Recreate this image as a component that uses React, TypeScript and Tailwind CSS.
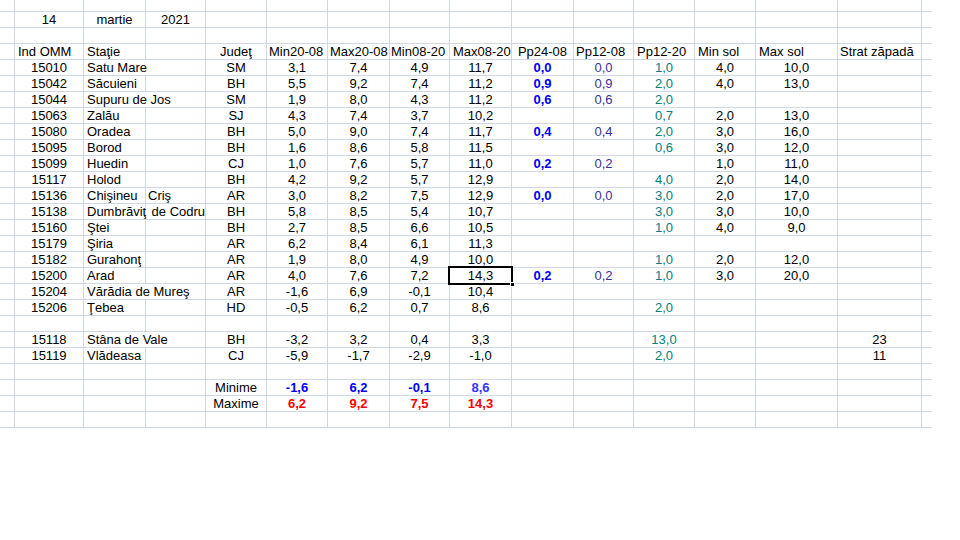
import React from "react";

type Cell = string | { t: string; cls?: string };

const widths = [
  "w-[15px]",
  "w-[69px]",
  "w-[62px]",
  "w-[60px]",
  "w-[61px]",
  "w-[61px]",
  "w-[62px]",
  "w-[60px]",
  "w-[62px]",
  "w-[62px]",
  "w-[60px]",
  "w-[61px]",
  "w-[61px]",
  "w-[82px]",
  "w-[84px]",
  "w-[10px]",
];

// default look of a data cell, per column
const colCls = [
  "",
  "text-center",
  "pl-[3px] text-left",
  "pl-[2px] text-left",
  "text-center",
  "text-center",
  "text-center",
  "text-center",
  "text-center",
  "text-center font-bold text-[#0000ff]",
  "text-center text-[#333399]",
  "text-center text-[#008080]",
  "text-center",
  "text-center",
  "text-center",
  "",
];

const headerCls = [
  "",
  "pl-[3px] text-left",
  "pl-[3px] text-left",
  "",
  "text-center",
  "pl-[2px] text-left",
  "pl-[2px] text-left",
  "pl-[1px] text-left",
  "pl-[3px] text-left",
  "text-center",
  "pl-[2px] text-left",
  "pl-[3px] text-left",
  "pl-[3px] text-left",
  "pl-[3px] text-left",
  "pl-[2px] text-left",
  "",
];

const stations: string[][] = [
  ["15010", "Satu Mare", "", "SM", "3,1", "7,4", "4,9", "11,7", "0,0", "0,0", "1,0", "4,0", "10,0", ""],
  ["15042", "Săcuieni", "", "BH", "5,5", "9,2", "7,4", "11,2", "0,9", "0,9", "2,0", "4,0", "13,0", ""],
  ["15044", "Supuru de Jos", "", "SM", "1,9", "8,0", "4,3", "11,2", "0,6", "0,6", "2,0", "", "", ""],
  ["15063", "Zalău", "", "SJ", "4,3", "7,4", "3,7", "10,2", "", "", "0,7", "2,0", "13,0", ""],
  ["15080", "Oradea", "", "BH", "5,0", "9,0", "7,4", "11,7", "0,4", "0,4", "2,0", "3,0", "16,0", ""],
  ["15095", "Borod", "", "BH", "1,6", "8,6", "5,8", "11,5", "", "", "0,6", "3,0", "12,0", ""],
  ["15099", "Huedin", "", "CJ", "1,0", "7,6", "5,7", "11,0", "0,2", "0,2", "", "1,0", "11,0", ""],
  ["15117", "Holod", "", "BH", "4,2", "9,2", "5,7", "12,9", "", "", "4,0", "2,0", "14,0", ""],
  ["15136", "Chişineu", "Criş", "AR", "3,0", "8,2", "7,5", "12,9", "0,0", "0,0", "3,0", "2,0", "17,0", ""],
  ["15138", "Dumbrăviţ", " de Codru", "BH", "5,8", "8,5", "5,4", "10,7", "", "", "3,0", "3,0", "10,0", ""],
  ["15160", "Ştei", "", "BH", "2,7", "8,5", "6,6", "10,5", "", "", "1,0", "4,0", "9,0", ""],
  ["15179", "Şiria", "", "AR", "6,2", "8,4", "6,1", "11,3", "", "", "", "", "", ""],
  ["15182", "Gurahonţ", "", "AR", "1,9", "8,0", "4,9", "10,0", "", "", "1,0", "2,0", "12,0", ""],
  ["15200", "Arad", "", "AR", "4,0", "7,6", "7,2", "14,3", "0,2", "0,2", "1,0", "3,0", "20,0", ""],
  ["15204", "Vărădia de Mureş", "", "AR", "-1,6", "6,9", "-0,1", "10,4", "", "", "", "", "", ""],
  ["15206", "Ţebea", "", "HD", "-0,5", "6,2", "0,7", "8,6", "", "", "2,0", "", "", ""],
];

const mountain: string[][] = [
  ["15118", "Stâna de Vale", "", "BH", "-3,2", "3,2", "0,4", "3,3", "", "", "13,0", "", "", "23"],
  ["15119", "Vlădeasa", "", "CJ", "-5,9", "-1,7", "-2,9", "-1,0", "", "", "2,0", "", "", "11"],
];

// names wider than their column spill over the empty next cell
const longNames = ["Satu Mare", "Supuru de Jos", "Vărădia de Mureş", "Stâna de Vale"];

const blank = (): Cell[] => Array(16).fill("");
const dataRow = (r: string[]): Cell[] => ["", ...r, ""];

function Row({
  cells,
  cls = colCls,
  h = "h-4",
  mergeBC = false,
  selected = -1,
}: {
  cells: Cell[];
  cls?: string[];
  h?: string;
  mergeBC?: boolean;
  selected?: number;
}) {
  return (
    <div className={`flex ${h}`}>
      {cells.map((c, i) => {
        if (mergeBC && i === 3) return null;
        const text = typeof c === "string" ? c : c.t;
        const extra = typeof c === "string" ? "" : c.cls ?? "";
        const w = mergeBC && i === 2 ? "w-[122px]" : widths[i];
        const last = i === 15;
        return (
          <div
            key={i}
            className={`relative shrink-0 whitespace-pre border-b border-[#d0d7e5] ${
              last ? "" : "border-r"
            } ${w} ${cls[i]} ${extra}`}
          >
            {text}
            {selected === i && (
              <div className="pointer-events-none absolute -left-[2px] -top-[2px] bottom-[-2px] right-[-2px] z-10 border-2 border-black">
                <div className="absolute -bottom-[4px] -right-[4px] h-[5px] w-[5px] border border-white bg-black" />
              </div>
            )}
          </div>
        );
      })}
    </div>
  );
}

export default function App() {
  const dateRow = blank();
  dateRow[1] = { t: "14", cls: "text-center" };
  dateRow[2] = { t: "martie", cls: "!pl-0 !text-center" };
  dateRow[3] = { t: "2021", cls: "!pl-0 !text-center" };

  const header: Cell[] = [
    "",
    "Ind OMM",
    "Staţie",
    "",
    "Judeţ",
    "Min20-08",
    "Max20-08",
    "Min08-20",
    "Max08-20",
    "Pp24-08",
    "Pp12-08",
    "Pp12-20",
    "Min sol",
    "Max sol",
    "Strat zăpadă",
    "",
  ];

  const minRow = blank();
  minRow[4] = "Minime";
  minRow[5] = { t: "-1,6", cls: "font-bold text-[#0000ff]" };
  minRow[6] = { t: "6,2", cls: "font-bold text-[#0000ff]" };
  minRow[7] = { t: "-0,1", cls: "font-bold text-[#0000ff]" };
  minRow[8] = { t: "8,6", cls: "font-bold text-[#3333ff]" };

  const maxRow = blank();
  maxRow[4] = "Maxime";
  maxRow[5] = { t: "6,2", cls: "font-bold text-[#ff0000]" };
  maxRow[6] = { t: "9,2", cls: "font-bold text-[#ff0000]" };
  maxRow[7] = { t: "7,5", cls: "font-bold text-[#ff0000]" };
  maxRow[8] = { t: "14,3", cls: "font-bold text-[#ff0000]" };

  return (
    <div className="h-[540px] w-[960px] overflow-hidden bg-white font-['Liberation_Sans',Arial,sans-serif] text-[13px] leading-[15px] text-black">
      <div className="flex w-[932px] flex-col">
        <Row cells={blank()} h="h-[12px]" />
        <Row cells={dateRow} />
        <Row cells={blank()} />
        <Row cells={header} cls={headerCls} />
        {stations.map((r) => (
          <Row
            key={r[0]}
            cells={dataRow(r)}
            mergeBC={longNames.includes(r[1])}
            selected={r[0] === "15200" ? 8 : -1}
          />
        ))}
        <Row cells={blank()} />
        {mountain.map((r) => (
          <Row key={r[0]} cells={dataRow(r)} mergeBC={longNames.includes(r[1])} />
        ))}
        <Row cells={blank()} />
        <Row cells={minRow} />
        <Row cells={maxRow} />
        <Row cells={blank()} />
      </div>
    </div>
  );
}
